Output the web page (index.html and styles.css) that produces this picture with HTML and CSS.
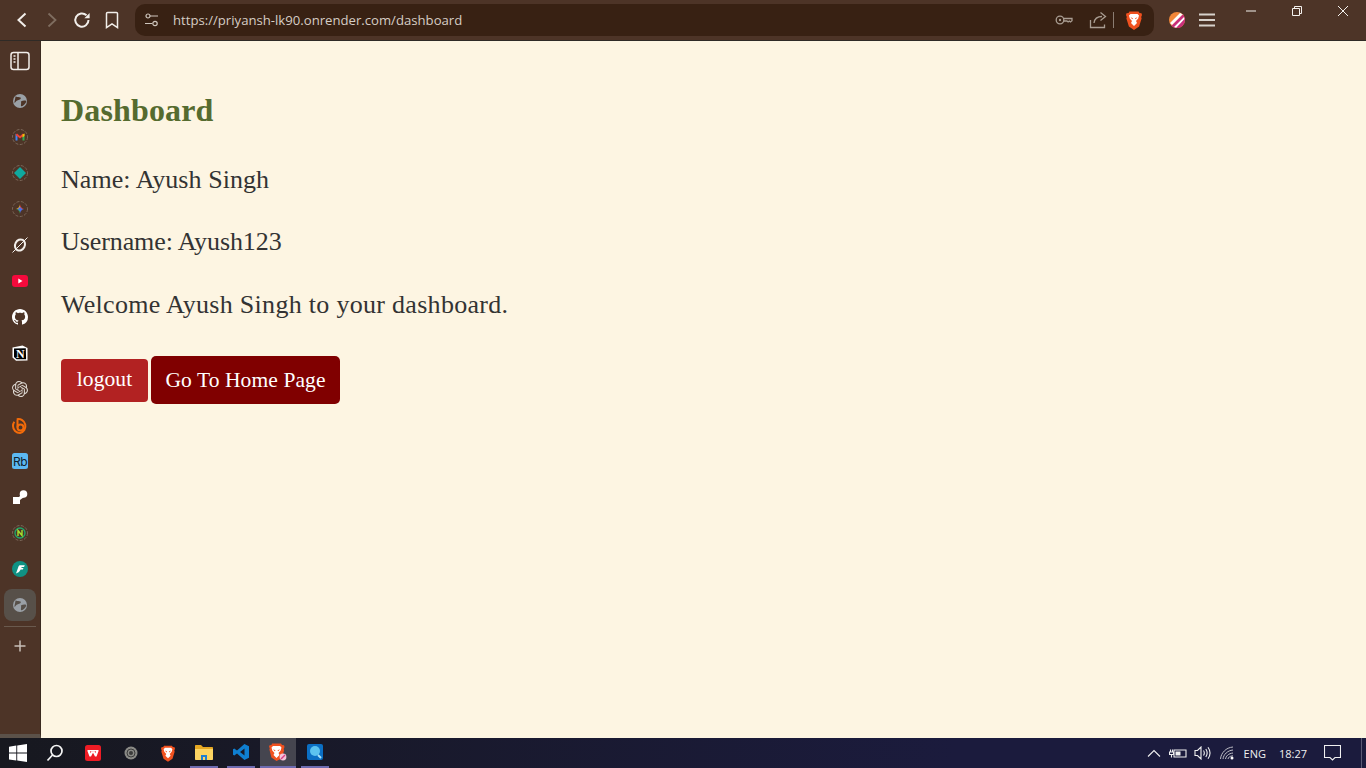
FILE: index.html
```html
<!DOCTYPE html>
<html lang="en">
<head>
<meta charset="utf-8">
<title>Dashboard</title>
<link rel="stylesheet" href="styles.css">
</head>
<body>
<div class="window">
  <header class="topbar">
    <div class="nav">
      <svg class="nav-ic" width="20" height="20" viewBox="0 0 20 20"><path d="M13.500 3.500 6.500 10l7 6.500" class="st-w"/></svg>
      <svg class="nav-ic" width="20" height="20" viewBox="0 0 20 20"><path d="M6.500 3.500l7 6.500-7 6.500" class="st-dim"/></svg>
      <svg class="nav-ic" width="20" height="20" viewBox="0 0 20 20"><path d="M16.500 10a6.600 6.600 0 1 1-2-4.700" class="st-w"/><path d="M17.600 3v5.200h-5.200z" class="fill-w"/></svg>
      <svg class="nav-ic" width="20" height="20" viewBox="0 0 20 20"><path d="M4.500 3.600c0-.6.5-1.100 1.100-1.100h8.800c.6 0 1.100.5 1.100 1.100v14l-5.500-3.800-5.500 3.800z" class="st-w2"/></svg>
    </div>
    <div class="address">
      <svg class="tune" width="16" height="14" viewBox="0 0 16 14"><circle cx="3" cy="3" r="2" class="st-t"/><path d="M5 3h8M0 10.500h7" class="st-t"/><circle cx="10" cy="10.500" r="2.200" class="st-t"/></svg>
      <span class="url">https://priyansh-lk90.onrender.com/dashboard</span>
      <svg class="key" width="18" height="12" viewBox="0 0 18 12"><circle cx="5" cy="6" r="3.800" class="st-g"/><circle cx="5" cy="6" r="1.200" class="fill-g"/><path d="M8.800 4.500h8.200v2.300l-1.500 1.200-1.200-1-1.200 1-1.200-1H8.800" class="st-g"/></svg>
      <svg class="share" width="18" height="18" viewBox="0 0 18 18"><path d="M1.500 9v7.500h14v-3M5 12c.5-4 3.500-6.500 8-6.500M11.500 1.500l5 4-5 4" class="st-g"/></svg>
      <span class="addr-sep"></span>
      <svg class="lion" width="16" height="19" viewBox="0 0 16 19"><path d="M3.500.5h9l1 1.500 2 .3.500 1.700-.8 2 .4 1.500-2.500 8L8 19l-5.100-3.500-2.500-8 .4-1.500L0 4l.5-1.700 2-.3z" class="lion-bg"/><path d="M4.500 3h7l1.500 1.500-.8 3-2.200 2.500 1 2-3 3-3-3 1-2-2.200-2.500-.8-3z" class="lion-f"/><path d="M4.500 6.200 7 7.200 6.300 8.300zM11.500 6.200 9 7.200l.7 1.100z" class="lion-bg"/></svg>
    </div>
    <div class="ext">
      <svg width="16" height="16" viewBox="0 0 16 16"><defs><clipPath id="extc"><circle cx="8" cy="8" r="8"/></clipPath></defs><g clip-path="url(#extc)"><rect width="16" height="16" fill="#f1873a"/><path d="M0 16 16 0v16z" fill="#c92f7b"/><path d="M1 11 11 1l3 1L3 13zM5 15 15 5l.5 2L7 16z" fill="#fff"/></g></svg>
      <svg width="18" height="14" viewBox="0 0 18 14"><path d="M1 1.500h16M1 7h16M1 12.500h16" class="st-m"/></svg>
    </div>
    <div class="win-ctl">
      <svg width="12" height="12" viewBox="0 0 12 12"><path d="M1 6h10" class="st-c"/></svg>
      <svg width="12" height="12" viewBox="0 0 12 12"><path d="M1.500 3.500h7v7h-7zM3.500 3.500v-2h7v7h-2" class="st-c"/></svg>
      <svg width="12" height="12" viewBox="0 0 12 12"><path d="M1 1l10 10M11 1 1 11" class="st-c"/></svg>
    </div>
  </header>

  <div class="middle">
    <aside class="sidebar">
      <svg class="panel-ic" width="20" height="20" viewBox="0 0 20 20"><rect x="1" y="1.500" width="18" height="17" rx="2.500" class="st-w2"/><path d="M8 1.500v17" class="st-w2"/><path d="M3.500 5h2M3.500 8h2M3.500 11h2" class="st-w2"/></svg>
      <span class="si"><svg width="14" height="14" viewBox="0 0 16 16"><circle cx="8" cy="8" r="8" fill="#9aa0a6"/><path d="M3 2.500c2 1.500 4 .5 5.500 1.500S7.500 7 5.500 7 3 10 1.500 10zM9 8.500c2-1 5-1.500 6-.5s-3 6-5 6 0-3.500-1-5.500z" fill="#4d3427"/></svg></span>
      <span class="si"><svg width="16" height="16" viewBox="0 0 16 16"><circle cx="8" cy="8" r="7.500" class="ring"/><path d="M3.500 4.500v7h2V7z" fill="#4285f4"/><path d="M12.500 4.500v7h-2V7z" fill="#34a853"/><path d="M5 4.500 8 7l3-2.500 1.500 1.500L8 9.500 3.500 6z" fill="#ea4335"/><path d="M10.500 5.500 12.500 4.500V7l-2 1.500z" fill="#fbbc04"/></svg></span>
      <span class="si"><svg width="16" height="16" viewBox="0 0 16 16"><circle cx="8" cy="8" r="7.500" class="ring"/><path d="M8 2 14 8 8 14 2 8z" fill="#0fa89e"/></svg></span>
      <span class="si"><svg width="16" height="16" viewBox="0 0 16 16"><circle cx="8" cy="8" r="7.500" class="ring"/><path d="M8 2.500 8 8 2.500 8C6 8 8 6 8 2.500z" fill="#f4b22c"/><path d="M8 2.500 8 8 13.500 8C10 8 8 6 8 2.500z" fill="#ea4335"/><path d="M8 13.500 8 8 2.500 8C6 8 8 10 8 13.500z" fill="#34a853"/><path d="M8 13.500 8 8 13.500 8C10 8 8 10 8 13.500z" fill="#4b6fe8"/><circle cx="8" cy="8" r="1.800" fill="#4b6fe8"/></svg></span>
      <span class="si"><svg width="16" height="16" viewBox="0 0 16 16"><ellipse cx="8" cy="8" rx="4.800" ry="5.800" class="st-w" transform="rotate(28 8 8)"/><path d="M.5 15.500 15.500.5" class="st-thin"/></svg></span>
      <span class="si"><svg width="16" height="12" viewBox="0 0 16 12"><rect width="16" height="12" rx="3" fill="#f50a3c"/><path d="M6.300 3.500v5L10.500 6z" fill="#fff"/></svg></span>
      <span class="si"><svg width="16" height="16" viewBox="0 0 16 16"><path fill="#fff" d="M8 0C3.580 0 0 3.580 0 8c0 3.540 2.290 6.530 5.470 7.590.4.070.55-.17.55-.38 0-.19-.01-.82-.01-1.490-2.010.37-2.530-.49-2.690-.94-.09-.23-.48-.94-.82-1.130-.28-.15-.68-.52-.01-.53.63-.01 1.080.58 1.230.82.720 1.210 1.870.87 2.330.66.070-.52.280-.87.510-1.070-1.780-.2-3.640-.89-3.640-3.950 0-.87.310-1.590.820-2.150-.08-.2-.36-1.020.08-2.120 0 0 .67-.21 2.200.82.640-.18 1.320-.27 2-.27s1.360.09 2 .27c1.530-1.040 2.200-.82 2.200-.82.440 1.100.16 1.920.08 2.120.51.560.82 1.270.82 2.150 0 3.070-1.870 3.750-3.650 3.950.29.250.54.730.54 1.480 0 1.070-.01 1.930-.01 2.200 0 .21.150.46.550.38A8.010 8.010 0 0 0 16 8c0-4.420-3.580-8-8-8z"/></svg></span>
      <span class="si"><svg width="16" height="16" viewBox="0 0 16 16"><path d="M.5 2.500 10.500.5l5 2.500v12.500L4 15.800l-3.500-3.300z" fill="#fff"/><path d="M2 3.500l11.800-.2.300 10.900H4.600L2 12z" fill="#000"/><text x="8.300" y="12.800" class="n-ic">N</text></svg></span>
      <span class="si"><svg width="16" height="16" viewBox="0 0 24 24"><path class="gpt" d="M22.2819 9.8211a5.9847 5.9847 0 0 0-.5157-4.9108 6.0462 6.0462 0 0 0-6.5098-2.9A6.0651 6.0651 0 0 0 4.9807 4.1818a5.9847 5.9847 0 0 0-3.9977 2.9 6.0462 6.0462 0 0 0 .7427 7.0966 5.98 5.98 0 0 0 .511 4.9107 6.051 6.051 0 0 0 6.5146 2.9001A5.9847 5.9847 0 0 0 13.2599 24a6.0557 6.0557 0 0 0 5.7718-4.2058 5.9894 5.9894 0 0 0 3.9977-2.9001 6.0557 6.0557 0 0 0-.7475-7.0729zm-9.022 12.6081a4.4755 4.4755 0 0 1-2.8764-1.0408l.1419-.0804 4.7783-2.7582a.7948.7948 0 0 0 .3927-.6813v-6.7369l2.02 1.1686a.071.071 0 0 1 .038.052v5.5826a4.504 4.504 0 0 1-4.4945 4.4944zm-9.6607-4.1254a4.4708 4.4708 0 0 1-.5346-3.0137l.142.0852 4.783 2.7582a.7712.7712 0 0 0 .7806 0l5.8428-3.3685v2.3324a.0804.0804 0 0 1-.0332.0615L9.74 19.9502a4.4992 4.4992 0 0 1-6.1408-1.6464zM2.3408 7.8956a4.485 4.485 0 0 1 2.3655-1.9728V11.6a.7664.7664 0 0 0 .3879.6765l5.8144 3.3543-2.0201 1.1685a.0757.0757 0 0 1-.071 0l-4.8303-2.7865A4.504 4.504 0 0 1 2.3408 7.872zm16.5963 3.8558L13.1038 8.364 15.1192 7.2a.0757.0757 0 0 1 .071 0l4.8303 2.7913a4.4944 4.4944 0 0 1-.6765 8.1042v-5.6772a.79.79 0 0 0-.407-.667zm2.0107-3.0231l-.142-.0852-4.7735-2.7818a.7759.7759 0 0 0-.7854 0L9.409 9.2297V6.8974a.0662.0662 0 0 1 .0284-.0615l4.8303-2.7866a4.4992 4.4992 0 0 1 6.6802 4.66zM8.3065 12.863l-2.02-1.1638a.0804.0804 0 0 1-.038-.0567V6.0742a4.4992 4.4992 0 0 1 7.3757-3.4537l-.142.0805L8.704 5.459a.7948.7948 0 0 0-.3927.6813zm1.0976-2.3654l2.602-1.4998 2.6069 1.4998v2.9994l-2.5974 1.5047-2.6067-1.4999z"/></svg></span>
      <span class="si"><svg width="16" height="17" viewBox="0 0 16 17"><path d="M4.800 2.300A7 7 0 1 1 8 16a7 7 0 0 1-7-7c0-1.500.5-3 1.300-4.200" class="st-or"/><path d="M5.500 2.500v8" class="st-or"/><circle cx="8.500" cy="10.500" r="3" class="st-or"/></svg></span>
      <span class="si"><span class="rb">Rb</span></span>
      <span class="si"><svg width="16" height="16" viewBox="0 0 16 16"><rect x="1" y="8" width="7" height="7" fill="#fff"/><circle cx="11.500" cy="5" r="3.800" fill="#fff"/><path d="M6 9 10 5l2 3-4 3z" fill="#fff"/></svg></span>
      <span class="si"><svg width="16" height="16" viewBox="0 0 16 16"><circle cx="8" cy="8" r="7.500" class="ring"/><circle cx="8" cy="8" r="5" fill="none" stroke="#20a86b" stroke-width="1.300"/><path d="M6 11V5.500l4 5V5" fill="none" stroke="#a6e22e" stroke-width="1.400"/></svg></span>
      <span class="si"><svg width="16" height="16" viewBox="0 0 16 16"><circle cx="8" cy="8" r="8" fill="#0f9183"/><path d="M4 12.500 6.500 5.500c.3-.8 1-1.200 1.800-1.200h4.500l-.8 1.700H9.700l-.4 1h2.200l-.7 1.500H8.700L7 11z" fill="#fff"/></svg></span>
      <span class="si si-active"><svg width="14" height="14" viewBox="0 0 16 16"><circle cx="8" cy="8" r="8" fill="#9aa0a6"/><path d="M3 2.500c2 1.500 4 .5 5.500 1.500S7.500 7 5.500 7 3 10 1.500 10zM9 8.500c2-1 5-1.500 6-.5s-3 6-5 6 0-3.500-1-5.500z" fill="#575049"/></svg></span>
      <span class="side-sep"></span>
      <svg class="plus" width="12" height="12" viewBox="0 0 12 12"><path d="M6 .5v11M.5 6h11" class="st-p"/></svg>
    </aside>
    <main class="page">
      <h1 class="title">Dashboard</h1>
      <p class="line line-name">Name: Ayush Singh</p>
      <p class="line line-user">Username: Ayush123</p>
      <p class="line">Welcome Ayush Singh to your dashboard.</p>
      <div class="actions">
        <button class="btn btn-logout" type="button">logout</button>
        <a class="btn btn-home" href="#">Go To Home Page</a>
      </div>
    </main>
  </div>

  <footer class="taskbar">
    <div class="tb-left">
      <span class="tb tb-start"><svg width="18" height="18" viewBox="0 0 18 18"><path fill="#fff" d="M0 2.700 7.300 1.600v7H0zM8.200 1.500 18 0v8.600H8.200zM0 9.500h7.300v7L0 15.400zM8.200 9.500H18V18l-9.800-1.400z"/></svg></span>
      <span class="tb tb-search"><svg width="18" height="18" viewBox="0 0 18 18"><circle cx="10.500" cy="7" r="5.500" class="st-tb"/><path d="M6.500 11 1.500 16.500" class="st-tb"/></svg></span>
      <span class="tb tb-wps"><svg width="16" height="16" viewBox="0 0 16 16"><rect width="16" height="16" rx="2.500" fill="#ee1c25"/><path d="M2.500 5h11v1.300l-2 5.200H10L8 7.800 6 11.500H4.500L2.500 6.300z" fill="#fff"/><path d="M5 6.300h1.500l-.8 2zM9.500 6.300H11l-.7 2zM7.500 6.300h1L8 7z" fill="#ee1c25"/></svg></span>
      <span class="tb tb-obs"><svg width="14" height="14" viewBox="0 0 14 14"><circle cx="7" cy="7" r="6.500" fill="#8a8a86"/><circle cx="7" cy="7" r="4" fill="none" stroke="#3b3b3b" stroke-width="1"/><circle cx="7" cy="7" r="2" fill="#3b3b3b"/></svg></span>
      <span class="tb tb-brave"><svg width="14" height="17" viewBox="0 0 16 19"><path d="M3.500.5h9l1 1.500 2 .3.500 1.700-.8 2 .4 1.500-2.500 8L8 19l-5.100-3.500-2.500-8 .4-1.500L0 4l.5-1.700 2-.3z" class="lion-bg"/><path d="M4.500 3h7l1.500 1.500-.8 3-2.200 2.500 1 2-3 3-3-3 1-2-2.200-2.500-.8-3z" class="lion-f"/><path d="M4.500 6.200 7 7.200 6.300 8.300zM11.500 6.200 9 7.200l.7 1.100z" class="lion-bg"/></svg></span>
      <span class="tb tb-files tb-open"><svg width="18" height="16" viewBox="0 0 18 16"><path d="M0 2c0-.6.4-1 1-1h5l2 2h9c.6 0 1 .4 1 1v2H0z" fill="#e6a823"/><path d="M0 5h18v10c0 .6-.4 1-1 1H1c-.6 0-1-.4-1-1z" fill="#fcd462"/><path d="M6 11h6v5h-2v-3H8v3H6z" fill="#1f7fd1"/></svg></span>
      <span class="tb tb-code tb-open"><svg width="16" height="16" viewBox="0 0 16 16"><path d="M11.400 0 16 2.200v11.600L11.400 16 4 9.500 1.300 11.500 0 10.800V5.200l1.300-.7L4 6.500zM11.500 4.400 7 8l4.500 3.600z" fill="#0f7fd0"/></svg></span>
      <span class="tb tb-cur tb-open"><svg width="18" height="18" viewBox="0 0 18 18"><path d="M3 .5h9l1 1.500 2 .3.500 1.700-.8 2 .4 1.500-2.500 8L7.500 18l-5.100-3.500-2-8 .4-1.500L0 4l.5-1.700 2-.3z" class="lion-bg"/><path d="M4 3h7l1.500 1.500-.8 3-2.200 2.500 1 2-3 3-3-3 1-2L3.300 7.500l-.8-3z" class="lion-f"/><path d="M4 6.200 6.500 7.200 5.800 8.300zM11 6.200 8.500 7.200l.7 1.100z" class="lion-bg"/><circle cx="14" cy="14" r="3.400" fill="#f5c3d9"/><path d="M12 16l4-4" stroke="#d93f85" stroke-width="1.500"/></svg></span>
      <span class="tb tb-bing tb-open"><svg width="16" height="16" viewBox="0 0 16 16"><rect width="16" height="16" rx="2" fill="#0b6fc4"/><circle cx="8" cy="7" r="5" fill="#5cc3f0"/><path d="M11 11l3 3" stroke="#a7e3fa" stroke-width="2"/></svg></span>
    </div>
    <div class="tray">
      <svg class="tray-up" width="14" height="8" viewBox="0 0 14 8"><path d="M1 7.500 7 1.500l6 6" class="st-tr"/></svg>
      <svg class="tray-batt" width="18" height="12" viewBox="0 0 18 12"><path d="M5 3h12v7H5z" class="st-tr"/><path d="M6.500 4.500h5v4h-5z" class="fill-tr"/><path d="M.5 5h4v2.500h-4zM1.500 2.500V5M3.500 2.500V5M2.500 7.500v3" class="st-tr"/></svg>
      <svg class="tray-vol" width="17" height="14" viewBox="0 0 17 14"><path d="M1 4.500h2.500L7 1v12L3.500 9.500H1zM9.500 4.500c1 1.500 1 3.500 0 5M11.800 3c1.700 2.500 1.700 5.500 0 8M14 1.200c2.500 3.500 2.500 8 0 11.600" class="st-tr"/></svg>
      <svg class="tray-wifi" width="14" height="14" viewBox="0 0 14 14"><path d="M.5 13C1 7 6 1.500 13 1M3 13c.5-4.500 4.500-8.500 10-9M5.500 13c.5-3 3-5.500 7.500-6M8 13c.3-1.500 1.500-3 5-3.200" class="st-wf"/><circle cx="12" cy="12" r="1.500" fill="#fff"/></svg>
      <span class="tray-text tray-lang">ENG</span>
      <span class="tray-text tray-time">18:27</span>
      <svg class="tray-note" width="17" height="16" viewBox="0 0 17 16"><path d="M.5.500h16v12h-5.500L8.500 15 6 12.500H.5z" class="st-tr"/></svg>
      <span class="show-desk"></span>
    </div>
  </footer>
</div>
</body>
</html>
```
FILE: styles.css
```css
* { box-sizing: border-box; }
html, body { margin: 0; padding: 0; height: 100%; overflow: hidden; }
body { background: #4d3427; font-family: "Liberation Serif", serif; }
svg { display: block; flex: none; }

.window { display: flex; flex-direction: column; width: 1366px; height: 768px; }

/* top bar */
.topbar { display: flex; align-items: center; height: 41px; background: #4d3427; border-bottom: 1px solid #2f2a26; flex: none; }
.nav { display: flex; align-items: center; gap: 10px; padding-left: 12px; width: 135px; }
.address { display: flex; align-items: center; width: 1019px; height: 32px; border-radius: 10px; background: #382113; padding-left: 10px; }
.tune { margin-right: 12px; }
.url { font: 13.150px "Open Sans", sans-serif; color: #d6cdc5; flex: 1; white-space: nowrap; }
.key { margin-right: 16px; }
.share { margin-right: 6px; }
.addr-sep { width: 1px; height: 16px; background: #8b7d72; margin-right: 12px; }
.lion { margin-right: 12px; }
.ext { display: flex; align-items: center; gap: 13px; padding-left: 15px; width: 84px; }
.win-ctl { display: flex; gap: 34px; padding-left: 7px; margin-top: -18px; }

.st-w { fill: none; stroke: #f2eeea; stroke-width: 2; }
.st-w2 { fill: none; stroke: #f2eeea; stroke-width: 1.500; }
.fill-w { fill: #f2eeea; }
.st-dim { fill: none; stroke: #7f6d60; stroke-width: 1.800; }
.st-t { fill: none; stroke: #cfc6bd; stroke-width: 1.200; }
.st-g { fill: none; stroke: #a99d92; stroke-width: 1.300; }
.fill-g { fill: #a99d92; }
.st-m { fill: none; stroke: #d8d2cc; stroke-width: 1.800; }
.st-c { fill: none; stroke: #f4f1ee; stroke-width: 1; }
.lion-bg { fill: #f0511f; }
.lion-f { fill: #fff; }

/* middle */
.middle { display: flex; flex: 1; min-height: 0; }
.sidebar { display: flex; flex-direction: column; align-items: center; width: 41px; flex: none; background: #4d3427; border-right: 1px solid #3a2a20; border-bottom: 4px solid #5b5149; padding-top: 10px; }
.panel-ic { margin-bottom: 14px; }
.si { display: flex; align-items: center; justify-content: center; width: 32px; height: 32px; margin-bottom: 4px; }
.si-active { background: #575049; border-radius: 8px; margin-bottom: 5px; }
.side-sep { width: 32px; height: 1px; background: #6a5a4e; margin-bottom: 13px; }
.ring { fill: none; stroke: #7a6658; stroke-width: 1; stroke-dasharray: 3 1.500; }
.st-thin { fill: none; stroke: #f2eeea; stroke-width: 1; }
.n-ic { font: 700 12px "Liberation Serif", serif; fill: #fff; text-anchor: middle; }
.gpt { fill: #ded8d2; }
.st-or { fill: none; stroke: #f26b0a; stroke-width: 2; }
.rb { display: flex; align-items: center; justify-content: center; width: 16px; height: 16px; border-radius: 2.500px; background: #5cb8f2; color: #10202c; font: 12px "Inter", sans-serif; letter-spacing: -.5px; }
.st-p { fill: none; stroke: #c8bfb8; stroke-width: 1.500; }

/* page */
.page { flex: 1; background: #fdf5e2; padding: 48px 20px 0; }
.title { margin: 0 0 31.500px; font: 700 32px/43px "Liberation Serif", serif; color: #556b2f; letter-spacing: .15px; }
.line { margin: 0 0 30.500px; font: 26px/32px "Liberation Serif", serif; color: #333; letter-spacing: .3px; }
.line-name { letter-spacing: .065px; }
.line-user { letter-spacing: -.09px; }
.actions { display: flex; align-items: center; gap: 3px; margin-top: 35.500px; }
.btn { display: block; border: 0; color: #fff; font: 21.500px/1 "Liberation Serif", serif; letter-spacing: .1px; text-decoration: none; padding: 0; text-align: center; }
.btn-logout { width: 87px; height: 43px; background: #b22222; border-radius: 4px; }
.btn-home { width: 189px; height: 48px; line-height: 48px; background: #800000; border-radius: 5px; }

/* taskbar */
.taskbar { display: flex; justify-content: space-between; height: 30px; flex: none; background: linear-gradient(90deg, #17181f, #1b1b3d 70%); }
.tb-left { display: flex; }
.tb { display: flex; align-items: center; justify-content: center; height: 30px; width: 37px; }
.tb-start { width: 36px; }
.tb-search, .tb-wps { width: 38px; }
.st-tb { fill: none; stroke: #f5f5f5; stroke-width: 1.700; }
.tb-open { border-bottom: 2px solid #6d6bb0; width: 28px; }
.tb-files { margin-left: 4px; margin-right: 9px; }
.tb-code { margin-right: 5px; }
.tb-cur { width: 36px; background: #45454f; margin-right: 5px; }
.tray { display: flex; align-items: center; }
.st-tr { fill: none; stroke: #f0f0f0; stroke-width: 1.100; }
.fill-tr { fill: #f0f0f0; }
.st-wf { fill: none; stroke: #bdbdc5; stroke-width: 1; }
.tray-text { font: 11px "Open Sans", sans-serif; color: #f0f0f0; }
.tray-up { margin-right: 8px; }
.tray-batt { margin-right: 7px; }
.tray-vol { margin-right: 9px; }
.tray-wifi { margin-right: 10px; }
.tray-lang { margin-right: 13px; }
.tray-time { margin-right: 17px; }
.tray-note { margin-right: 20px; }
.show-desk { width: 1px; height: 30px; background: #5a5a75; margin-right: 4px; }
```
